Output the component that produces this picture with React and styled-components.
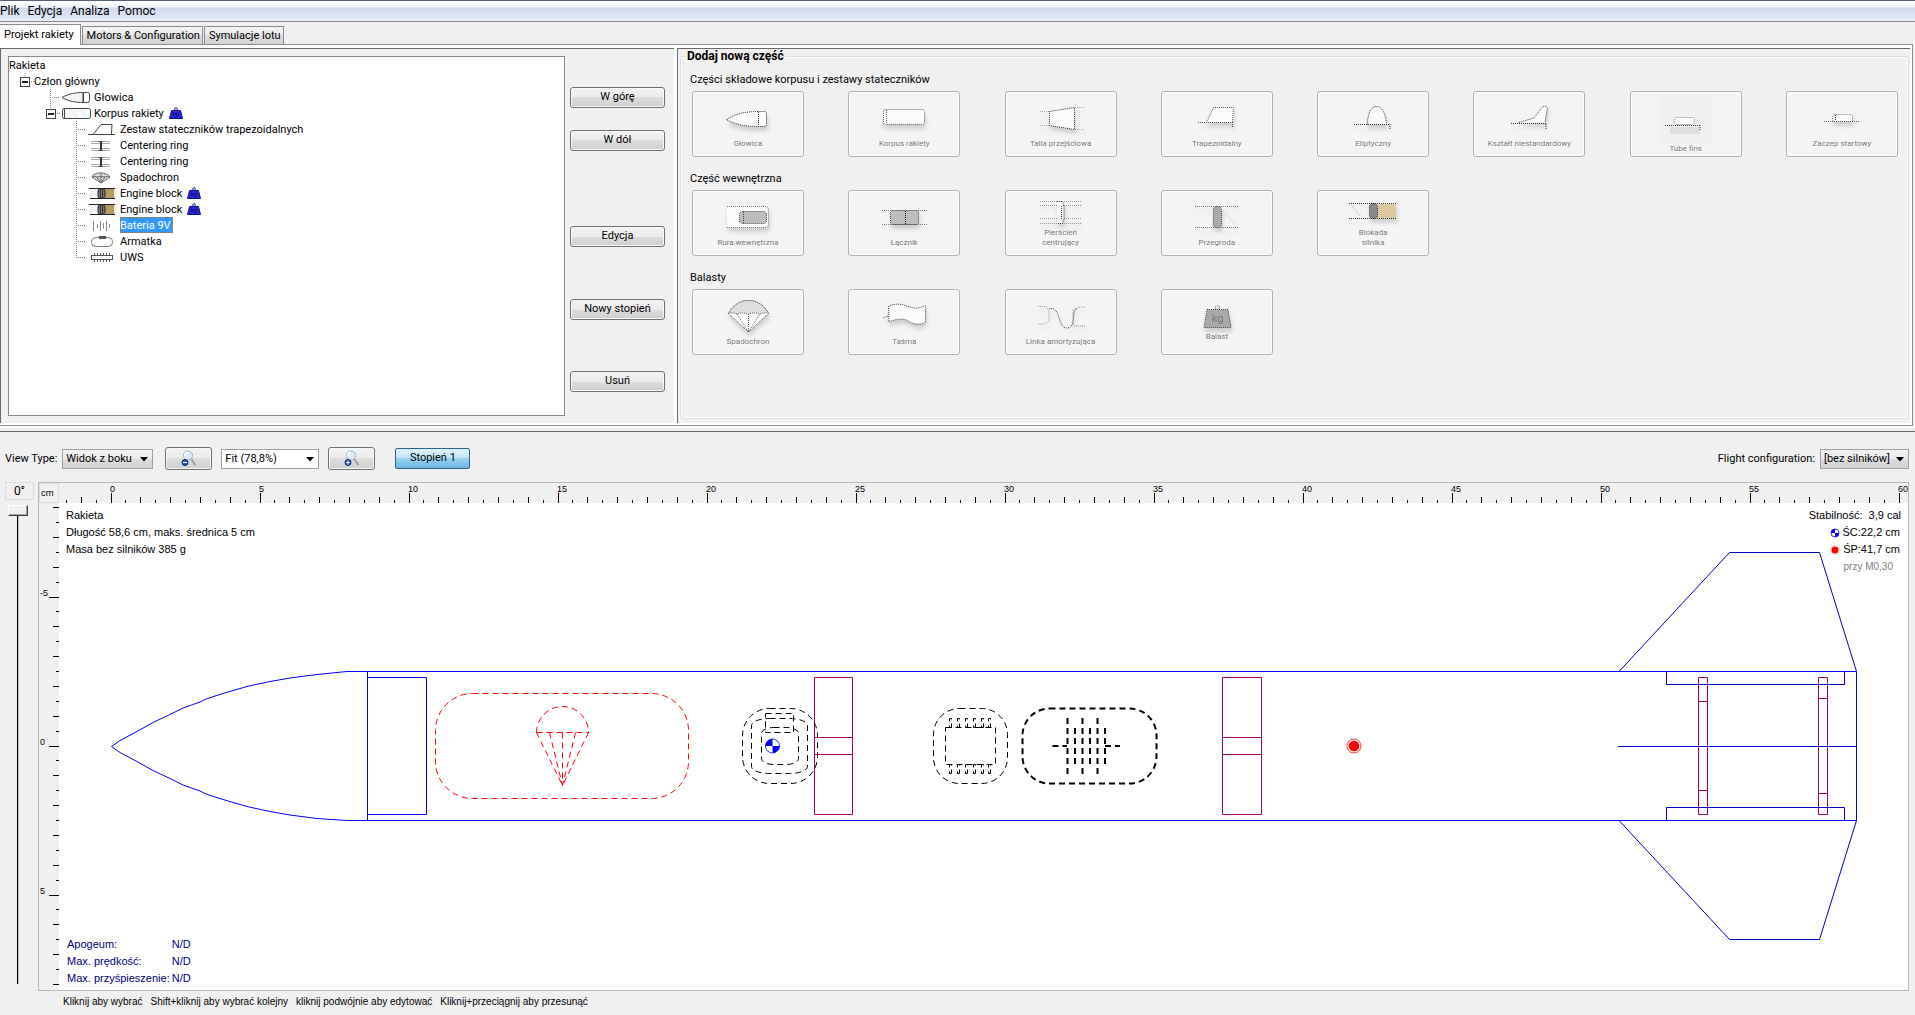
import React from "react";
import styled, { createGlobalStyle, css } from "styled-components";

const UI_FONT = `Roboto, "Noto Sans", sans-serif`;
const DRAW_FONT = `"Liberation Sans", Arial, sans-serif`;

const GlobalStyle = createGlobalStyle`
  *, *::before, *::after { box-sizing: border-box; }
  body {
    margin: 0;
    background: #f0f0f0;
    color: #000;
    font: 11px/16px ${UI_FONT};
  }
  button, select, input { font: inherit; color: inherit; margin: 0; }
  svg { display: block; }
`;

const Window = styled.div`
  display: flex;
  flex-direction: column;
  min-height: 100vh;
`;

/* ---------- menu and tabs ---------- */

const MenuBar = styled.nav`
  display: flex;
  gap: 8px;
  height: 22px;
  padding: 1px 0 0;
  border-top: 1px solid #56627a;
  border-bottom: 1px solid #8b8b8b;
  background: linear-gradient(#ffffff 0, #f1f4fb 6px, #d3daed 7px, #e1e7f5 18px, #f0f0f0 20px);
`;

const MenuButton = styled.button`
  padding: 0;
  border: 0;
  background: none;
  font-size: 12px;
  line-height: 16px;
  height: 18px;
`;

const TabStrip = styled.div`
  display: flex;
  align-items: flex-end;
  gap: 1px;
  height: 23px;
  border-bottom: 1px solid #898c95;
  margin-right: 2px;
`;

const Tab = styled.button`
  height: 18px;
  padding: 1px 2px 0 4px;
  border: 1px solid #898c95;
  border-bottom: 0;
  background: linear-gradient(#f3f3f3, #ebebeb 50%, #dddddd 50%, #d2d2d2);
  line-height: 16px;
  ${(p) =>
    p.$active &&
    css`
      height: 21px;
      margin-bottom: -1px;
      padding: 0 6px 1px 4px;
      border-left: 0;
      background: #fff;
    `}
`;

/* ---------- upper panes ---------- */

const DesignTab = styled.section`
  display: flex;
  gap: 3px;
  margin-right: 2px;
  padding: 3px 2px 2px 0;
  border-right: 1px solid #898c95;
  border-bottom: 1px solid #898c95;
  background: #fff;
`;

const Pane = styled.div`
  display: flex;
  min-height: 375px;
  border-top: 1px solid #696969;
  border-left: 1px solid #696969;
  background: #f0f0f0;
`;

const TreePane = styled(Pane)`
  flex: 0 0 674px;
  gap: 5px;
  padding: 7px 9px 7px 7px;
`;

const Tree = styled.ul`
  flex: 1;
  margin: 0;
  padding: 0;
  list-style: none;
  border: 1px solid #828790;
  background: #fff;
`;

const TreeRow = styled.li`
  display: flex;
  align-items: center;
  height: 16px;
  padding-left: ${(p) => p.$indent}px;
`;

const Expander = styled.button`
  padding: 0;
  border: 0;
  background: none;
`;

const RowIcon = styled.svg`
  flex: none;
  width: 30px;
  height: 16px;
  margin-right: 3px;
`;

const RowLabel = styled.span`
  padding-top: 2px;
  white-space: pre;
  line-height: 14px;
  ${(p) =>
    p.$selected &&
    css`
      padding-right: 2px;
      background: #3399ff;
      color: #fff;
      outline: 1px dotted #cc6600;
      outline-offset: -1px;
    `}
`;

const RowWeight = styled.svg`
  width: 14px;
  height: 12px;
  margin-left: 5px;
`;

const Actions = styled.div`
  display: flex;
  flex-direction: column;
  width: 95px;
  padding-top: 31px;
`;

const ActionButton = styled.button`
  height: 21px;
  margin-bottom: ${(p) => p.$gap || 0}px;
  padding: 0 0 1px;
  border: 1px solid #707070;
  border-radius: 3px;
  background: linear-gradient(#f2f2f2, #ebebeb 50%, #dddddd 50%, #cfcfcf);
  box-shadow: inset 0 0 0 1px #f8f8f8;
  line-height: 16px;
`;

const PalettePane = styled(Pane)`
  flex: 1;
  min-width: 0;
  padding: 0 1px 4px 2px;
`;

const Palette = styled.fieldset`
  flex: 1;
  min-width: 0;
  margin: 0;
  padding: 9px 10px 0 11px;
  border: 1px solid #d5dfe5;
  border-radius: 3px;
  box-shadow: inset 0 0 0 1px #fff;
`;

const PaletteTitle = styled.legend`
  margin-left: -6px;
  padding: 0 2px 0 1px;
  font-size: 12px;
  font-weight: bold;
  line-height: 14px;
  background: #f0f0f0;
`;

const PartGroup = styled.section`
  margin-bottom: 14px;
`;

const GroupTitle = styled.h3`
  margin: 0 -2px 3px;
  font-size: 11px;
  font-weight: normal;
  line-height: 16px;
`;

const PartGrid = styled.div`
  display: grid;
  grid-template-columns: repeat(8, 112px);
  justify-content: space-between;
`;

const PartButton = styled.button`
  display: flex;
  flex-direction: column;
  align-items: center;
  justify-content: center;
  height: 66px;
  padding: 0;
  border: 1px solid #adb2b5;
  border-radius: 3px;
  background: #f4f4f4;
  box-shadow: inset 0 0 0 1px #fcfcfc;
  color: #777;
  font-size: 8px;
  line-height: 10px;
`;

const PartCaption = styled.span`
  max-width: ${(p) => (p.$wrap ? "48px" : "none")};
  text-shadow: 1px 1px 0 #fff;
`;

const PartIcon = styled.svg`
  width: ${(p) => p.$w || 48}px;
  height: ${(p) => p.$h || 40}px;
  overflow: visible;
  fill: #fbfbfb;
  stroke: #333;
  stroke-width: 1;
  stroke-dasharray: 1 1;
  background: ${(p) => (p.$patch ? "#f0f0f0" : "none")};
  filter: ${(p) => (p.$patch ? "none" : "drop-shadow(1px 4px 2px rgba(0, 0, 0, 0.16))")};
`;

/* ---------- lower pane ---------- */

const FigurePane = styled.section`
  display: flex;
  flex-direction: column;
  flex: 1;
  margin-top: 2px;
  border-top: 3px solid #f0f0f0;
  box-shadow: 0 -2px 0 #fff;
`;

const Toolbar = styled.div`
  display: flex;
  align-items: center;
  height: 51px;
  padding: 3px 6px 0 5px;
  border-top: 1px solid #696969;
`;

const FieldLabel = styled.label`
  margin-right: 5px;
  padding-top: 1px;
`;

const SelectBox = styled.span`
  display: inline-grid;
  align-items: center;
  width: ${(p) => p.$w}px;
  margin-right: ${(p) => p.$gap || 0}px;
  > * { grid-area: 1 / 1; }
  > svg { justify-self: end; margin: 2px 5px 0 0; pointer-events: none; }
`;

const Select = styled.select`
  appearance: none;
  width: 100%;
  height: 20px;
  padding: 1px 0 0 3px;
  border: 1px solid #a0a0a4;
  border-radius: 0;
  line-height: 16px;
  background: ${(p) =>
    p.$plain ? "#fff" : "linear-gradient(#f2f2f2, #ebebeb 50%, #dddddd 50%, #d2d2d2)"};
`;

const ZoomButton = styled.button`
  display: grid;
  place-items: center;
  width: 47px;
  height: 23px;
  margin-right: ${(p) => p.$gap}px;
  padding: 0;
  border: 1px solid #707070;
  border-radius: 3px;
  background: linear-gradient(#f2f2f2, #ebebeb 50%, #dddddd 50%, #cfcfcf);
  box-shadow: inset 0 0 0 1px #f8f8f8;
`;

const StageButton = styled.button`
  width: 75px;
  height: 21px;
  margin-right: auto;
  padding: 0 0 1px;
  border: 1px solid #2c628b;
  border-radius: 2px;
  background: linear-gradient(#e0f2fb, #c0e3f6 50%, #98d1ef 50%, #6fb6df);
  line-height: 16px;
`;

const Viewer = styled.div`
  display: flex;
  flex: 1;
  gap: 4px;
  padding: 0 6px 0 5px;
`;

const Rotation = styled.div`
  display: flex;
  flex-direction: column;
  width: 29px;
  padding: 0 0 7px;
`;

const Angle = styled.output`
  height: 18px;
  margin-bottom: 5px;
  border: 1px solid #dcdcdc;
  text-align: center;
  font-size: 12px;
`;

const AngleSlider = styled.input`
  && { margin: 0 6px 0 3px; }
  appearance: none;
  writing-mode: vertical-lr;
  flex: 1;
  width: 20px;
  background: linear-gradient(90deg, transparent 9px, #000 9px, #000 10px, #777 10px, #fff 11px, transparent 12px);
  &::-webkit-slider-thumb {
    appearance: none;
    width: 20px;
    height: 11px;
    border: 1px solid;
    border-color: #fff #404040 #404040 #fff;
    background: #f0f0f0;
    box-shadow: inset -1px -1px 0 #a0a0a0;
  }
`;

const Frame = styled.div`
  display: grid;
  grid-template-columns: 20px 1fr;
  grid-template-rows: 20px 1fr;
  flex: 1;
  min-width: 0;
  min-height: 509px;
  border: 1px solid #b8b8b8;
`;

const Unit = styled.div`
  padding-left: 1px;
  border: 1px solid #dcdcdc;
  font-size: 9px;
  line-height: 18px;
`;

const Ruler = styled.svg`
  width: 100%;
  height: 100%;
  font: 9px ${DRAW_FONT};
`;

const Sheet = styled.div`
  position: relative;
  overflow: hidden;
  background: #fff;
  font: 11px/16px ${DRAW_FONT};
`;

const Drawing = styled.svg`
  position: absolute;
  inset: 0;
  width: 100%;
  height: 100%;
`;

const Info = styled.div`
  position: absolute;
  top: 4px;
  left: 7px;
  line-height: 17px;
`;

const Stability = styled.div`
  position: absolute;
  top: 4px;
  right: 7px;
  display: grid;
  justify-items: end;
  line-height: 17px;
  white-space: pre;
`;

const Point = styled.span`
  display: flex;
  align-items: center;
  gap: 3px;
  padding-right: 1px;
`;

const Mach = styled.span`
  padding-right: 8px;
  font-size: 10px;
  color: #808080;
`;

const Results = styled.table`
  position: absolute;
  bottom: 3px;
  left: 8px;
  border-spacing: 0;
  color: #000080;
  th, td { padding: 0 2px 0 0; font-weight: normal; text-align: left; line-height: 17px; }
`;

const Hints = styled.footer`
  display: flex;
  gap: 8px;
  height: 24px;
  padding: 1px 0 0 63px;
  font: 10px/20px ${DRAW_FONT};
`;

/* ---------- small drawings ---------- */

const Arrow = () => (
  <svg width="8" height="5" viewBox="0 0 8 5">
    <path d="M0 0h8L4 4.5z" />
  </svg>
);

const WeightIcon = () => (
  <RowWeight viewBox="0 0 14 12">
    <circle cx="7" cy="2" r="1.4" fill="none" stroke="#3a3a8c" />
    <path d="M2.5 3.500h9l2 8h-13z" fill="#2424d8" stroke="#15157a" />
    <text x="7" y="9" fontSize="6" textAnchor="middle" fill="#0a0a66">kg</text>
  </RowWeight>
);

const Branch = ({ last }) => (
  <svg width="11" height="16" stroke="#808080" strokeDasharray="1 1">
    <path d={`M.5 0V${last ? 8 : 16}M0 8.5H10`} fill="none" />
  </svg>
);

const Toggle = ({ name, lead, stub }) => (
  <>
    <Expander aria-label={`Zwiń: ${name}`}>
      <svg width="10" height="16" fill="#fff" stroke="#444">
        <path d={`M${stub} 0V4`} stroke="#808080" strokeDasharray="1 1" />
        <rect x=".5" y="4.5" width="9" height="9" />
        <path d="M2 9H8" stroke="#222" strokeWidth="2" />
      </svg>
    </Expander>
    <svg width={lead} height="16" stroke="#808080" strokeDasharray="1 1">
      <path d={`M1 8.5H${lead}`} />
    </svg>
  </>
);

const engineGlyph = (
  <g>
    <rect x="3" y="3" width="27" height="10" fill="#f4f4f4" stroke="none" />
    <rect x="18" y="4" width="9" height="9" fill="#b79a5c" stroke="none" />
    <rect x="11" y="4" width="7" height="9" rx="2" fill="#777" stroke="#222" />
    <path d="M13.5 5v7M15.5 5v7" stroke="#333" />
    <path d="M2 3.5H28M3 13.5H28" stroke="#222" />
  </g>
);

const ringGlyph = (
  <g>
    <path d="M4 4.5H23M4 6.5H23M4 11.5H23M4 13.5H23" stroke="#aaa" />
    <path d="M11 4.5h5M11 13.5h5" stroke="#555" />
    <path d="M14 5v8" stroke="#333" strokeWidth="2" />
  </g>
);

const rowGlyphs = {
  nose: (
    <g>
      <path d="M1 8.500C8 4.500 15 3.500 22 3.500V13.500C15 13.500 8 12.500 1 8.500z" fill="#f4f4f4" />
      <path d="M22.500 3.500h4q2 0 2 2v6q0 2-2 2h-4z" />
    </g>
  ),
  body: (
    <g>
      <rect x="1.5" y="3.5" width="28" height="10" rx="2" fill="#f8f8f8" />
      <path d="M3.500 4v9" />
      <path d="M10 5l6 7M20 5l6 7" stroke="#e2e2e2" />
    </g>
  ),
  fins: <path d="M1 13.500H28M6.500 13L14 3.500H25L24.500 13" fill="none" />,
  ring: ringGlyph,
  chute: (
    <g stroke="#666">
      <path d="M5 8C7 2.500 20 2.500 23 8L14 14z" fill="#ddd" />
      <path d="M5 8q3-1 5 0 4-1 8 0 2-1 5 0M10 8l4 6 4-6M14 4v10" fill="none" />
    </g>
  ),
  engine: engineGlyph,
  battery: (
    <path d="M6.500 4V14M10.500 7V11M13.500 4V14M16.500 6V12M19.500 4V14M22.500 7V11" stroke="#888" />
  ),
  cannon: (
    <g stroke="#777">
      <rect x="4.5" y="4.5" width="21" height="9" rx="4" />
      <path d="M12 4.500h7" strokeWidth="3" stroke="#555" />
    </g>
  ),
  chip: (
    <g stroke="#555">
      <rect x="4.5" y="6.5" width="21" height="4" />
      <path d="M7.500 4v2M10.500 4v2M13.500 4v2M16.500 4v2M19.500 4v2M22.500 4v2M7.500 11v2M10.500 11v2M13.500 11v2M16.500 11v2M19.500 11v2M22.500 11v2" />
    </g>
  ),
};

const TreeGlyph = ({ kind }) => (
  <RowIcon fill="#fff" stroke="#444">{rowGlyphs[kind]}</RowIcon>
);

const Magnifier = ({ plus }) => (
  <svg width="16" height="17" viewBox="0 0 16 17">
    <path d="M10 9l4 6" stroke="#b0b0b0" strokeWidth="2" />
    <path d="M10.500 9l4 6" stroke="#777" strokeWidth=".7" />
    <circle cx="7" cy="5.500" r="4.500" fill="#dcebfa" stroke="#9db2c8" />
    <path d="M4 5.500a3 3 0 013-3" stroke="#fff" strokeWidth="1.600" fill="none" />
    <circle cx="4" cy="12.500" r="3" fill="#1b4fae" stroke="#0d2e73" />
    <path d={plus ? "M2 12.500h4M4 10.500v4" : "M2 12.500h4"} stroke="#fff" strokeWidth="1.200" />
  </svg>
);

/* ---------- part palette ---------- */

const groups = [
  {
    title: "Części składowe korpusu i zestawy stateczników",
    parts: [
      {
        name: "Głowica",
        art: (
          <path d="M2.500 20.500C12 14.500 22 12.500 34.500 12.500V27.500C22 27.500 12 26 2.500 20.500zM34.500 12.500h6q2 0 2 2v11q0 2-2 2h-6" />
        ),
      },
      {
        name: "Korpus rakiety",
        art: (
          <g stroke="#666">
            <rect x="3.5" y="10.5" width="41" height="15" rx="2" />
            <path d="M6.500 11v14" />
          </g>
        ),
      },
      {
        name: "Talia przejściowa",
        art: (
          <g>
            <path d="M12.500 12.500L37.500 8.500V30.500L12.500 26.500z" />
            <path d="M3 12.500h9M3 26.500h9M38 8.500h10M38 30.500h10" stroke="#aaa" />
          </g>
        ),
      },
      {
        name: "Trapezoidalny",
        art: (
          <g stroke="#555">
            <path d="M13.500 23.500L20.500 8.500H40.500L39.500 23.500" />
            <path d="M5 23.500H40M39.500 23V29" />
          </g>
        ),
      },
      {
        name: "Eliptyczny",
        art: (
          <g>
            <path d="M18.500 25.500C18.500 17 21 7.500 27.500 7.500S37 17 37.500 25.500" />
            <path d="M5 25.500H41M41 25V31" />
          </g>
        ),
      },
      {
        name: "Kształt niestandardowy",
        art: (
          <g>
            <path d="M14 23.500L29 19L37 8.500Q40 6 42.500 8.500L40 23.500" />
            <path d="M6 24.500H41M41 25V31" />
          </g>
        ),
      },
      {
        name: "Tube fins",
        w: 50,
        h: 50,
        patch: true,
        art: (
          <g>
            <rect x="9" y="33" width="30" height="7" fill="#dedede" stroke="none" />
            <rect x="13.5" y="23.5" width="20" height="7" rx="2" stroke="#888" />
            <path d="M4 31.500H39M39 31V37" />
          </g>
        ),
      },
      {
        name: "Zaczep startowy",
        art: (
          <g>
            <rect x="14.5" y="15.5" width="20" height="7" rx="2" stroke="#777" />
            <path d="M17.500 16v6" />
            <path d="M6 22.500H41" stroke="#666" />
          </g>
        ),
      },
    ],
  },
  {
    title: "Część wewnętrzna",
    parts: [
      {
        name: "Rura wewnętrzna",
        art: (
          <g stroke="#777">
            <path d="M3 8.500H41Q44.500 8.500 44.500 12V26Q44.500 29.500 41 29.500H3" />
            <rect x="15.5" y="13.5" width="27" height="12" rx="3" fill="#bdbdbd" stroke="#444" />
            <path d="M19.500 14v11" stroke="#444" />
          </g>
        ),
      },
      {
        name: "Łącznik",
        art: (
          <g stroke="#777">
            <rect x="10.5" y="12.5" width="28" height="14" rx="2" fill="#bdbdbd" stroke="#444" />
            <path d="M25.500 13v13" stroke="#111" />
            <path d="M2 12.500H47M2 26.500H47" />
          </g>
        ),
      },
      {
        name: "Pierścień centrujący",
        h: 30,
        wrap: true,
        art: (
          <g stroke="#999">
            <path d="M3 3.500H45M3 7.500H45M3 20.500H45M3 25.500H45" />
            <path d="M20 3.500h6v4h1v14h-1v4h-6M24.500 8v13" stroke="#444" />
          </g>
        ),
      },
      {
        name: "Przegroda",
        art: (
          <g stroke="#777">
            <path d="M2 8.500H45M2 29.500H45" />
            <rect x="20.5" y="8.5" width="8" height="21" rx="3" fill="#aaa" stroke="#444" />
            <path d="M30 12l12 14" stroke="#ccc" />
          </g>
        ),
      },
      {
        name: "Blokada silnika",
        h: 30,
        wrap: true,
        art: (
          <g>
            <rect x="29" y="6" width="18" height="14" fill="#dcc9a0" stroke="none" />
            <rect x="20.5" y="5.5" width="8" height="15" rx="3" fill="#888" />
            <path d="M0 5.500H48M0 20.500H48" />
            <path d="M3 8l9 11" stroke="#aaa" />
          </g>
        ),
      },
    ],
  },
  {
    title: "Balasty",
    parts: [
      {
        name: "Spadochron",
        art: (
          <g stroke="#555">
            <path d="M4.500 16.500C9 8 16 3.500 24.500 3.500S40 8 44.500 16.500L24.500 35z" />
            <path d="M4.500 16.500C9 8 16 3.500 24.500 3.500S40 8 44.500 16.500Q40 15 36 17Q30 15 24.500 17Q18 15 13 17Q9 15 4.500 16.500z" fill="#dedede" />
            <path d="M13 17L24.500 35L36 17M24.500 17V35" fill="none" />
          </g>
        ),
      },
      {
        name: "Taśma",
        art: (
          <g stroke="#444">
            <path d="M8.500 9.500C16 5 24 8 30 10S40 11 45.500 8.500V25C40 29 32 27 28 24S15 22 9 25z" />
            <path d="M8 19L3 21" />
          </g>
        ),
      },
      {
        name: "Linka amortyzująca",
        art: (
          <g fill="none" stroke="#444">
            <path d="M1 9.500h8l3 4V24q-3 3-6 3H1" stroke="#999" />
            <path d="M12 12C24 8 20 31 30 31S34 12 40 12" />
            <path d="M36 28V13q3-3 12-3M37 29h11" stroke="#888" />
          </g>
        ),
      },
      {
        name: "Balast",
        h: 30,
        art: (
          <g stroke="#444">
            <circle cx="24.500" cy="5.500" r="2" fill="none" />
            <path d="M14 7.500H35L38 25.500H11z" fill="#a9a9a9" />
            <text x="24.500" y="20" fontSize="11" textAnchor="middle" fill="#777" stroke="none">kg</text>
          </g>
        ),
      },
    ],
  },
];

/* ---------- component tree ---------- */

const rows = [
  { label: "Głowica", indent: 41, icon: "nose" },
  { label: "Korpus rakiety", indent: 37, icon: "body", open: true, weight: true },
  { label: "Zestaw stateczników trapezoidalnych", icon: "fins" },
  { label: "Centering ring", icon: "ring" },
  { label: "Centering ring", icon: "ring" },
  { label: "Spadochron", icon: "chute" },
  { label: "Engine block", icon: "engine", weight: true },
  { label: "Engine block", icon: "engine", weight: true },
  { label: "Bateria 9V", icon: "battery", selected: true },
  { label: "Armatka", icon: "cannon" },
  { label: "UWS", icon: "chip", last: true },
];

/* ---------- rulers and rocket figure ---------- */

/* Pixels per centimetre and the zero marks measured from the sheet's corner. */
const SCALE = 29.8;
const ZERO_X = 52;
const ZERO_Y = 243;

const halfCentimetres = (from, to) =>
  Array.from({ length: to - from + 1 }, (_, i) => from + i);

const tickLength = (n) => (n % 10 === 0 ? 10 : n % 2 === 0 ? 6 : 3);

const TopRuler = () => (
  <Ruler shapeRendering="crispEdges">
    {halfCentimetres(-3, 120).map((n) => {
      const x = Math.floor(ZERO_X + (n * SCALE) / 2);
      return (
        <g key={n}>
          <rect x={x} y={20 - tickLength(n)} width="1" height={tickLength(n)} />
          {n % 10 === 0 && <text x={x - 1} y="9">{n / 2}</text>}
        </g>
      );
    })}
  </Ruler>
);

const SideRuler = () => (
  <Ruler shapeRendering="crispEdges">
    {halfCentimetres(-16, 16).map((n) => {
      const y = Math.floor(ZERO_Y + (n * SCALE) / 2);
      return (
        <g key={n}>
          <rect x={20 - tickLength(n)} y={y} width={tickLength(n)} height="1" />
          {n % 10 === 0 && <text x="1" y={y - 1}>{n / 2}</text>}
        </g>
      );
    })}
  </Ruler>
);

const noseProfile = [
  [111.5, 0], [120, 6], [136, 14.5], [153, 24], [171, 32.5], [183, 38.5], [200, 44.5],
  [205, 47], [215, 50.5], [233, 56], [249, 60.5], [270, 65], [290, 68.5], [317, 72], [347, 75], [367.5, 75],
];
const nosePoints = (side) =>
  noseProfile.map(([x, r]) => `${x},${746.5 + side * Math.min(r, side < 0 ? 75 : 74)}`).join(" ");

const pins = [949.5, 957.5, 965.5, 973.5, 981.5, 988.5];

const CgMark = ({ cx, cy, r }) => (
  <g>
    <circle cx={cx} cy={cy} r={r} fill="#fff" stroke="#0000ff" strokeWidth=".8" />
    <path
      d={`M${cx} ${cy}H${cx - r}A${r} ${r} 0 01${cx} ${cy - r}zM${cx} ${cy}H${cx + r}A${r} ${r} 0 01${cx} ${cy + r}z`}
      fill="#0000ff"
    />
  </g>
);

const CpMark = ({ cx, cy, r }) => (
  <g>
    <circle cx={cx} cy={cy} r={r} fill="#fff" stroke="#ff0000" strokeWidth=".8" />
    <circle cx={cx} cy={cy} r={r - 1.7} fill="#ff0000" />
  </g>
);

const Rocket = () => (
  <Drawing fill="none" aria-label="Widok z boku">
    <g transform="translate(-59 -503)">
      <g stroke="#0000cc">
        <path d="M1619 671.500L1729.500 552.500H1819.500L1856.500 671.500" />
        <path d="M1619 820.500L1729.500 939.500H1819.500L1856.500 820.500" />
        <path d="M1618 746.500H1856" />
        <path d="M1666.500 671.500V684.500H1844.500V671.500M1666.500 820.500V807.500H1844.500V820.500" />
      </g>
      <g stroke="#0000ff">
        <polyline points={nosePoints(-1)} />
        <polyline points={nosePoints(1)} />
        <path d="M367.500 671.500V820.500M367.500 677.500H426.500V814.500H367.500" />
        <path d="M367.500 671.500H1856.500V820.500H367.500" />
      </g>
      <g stroke="#a8005f">
        <path d="M814.500 677.500H852.500V814.500H814.500zM814.500 737.500H852.500M814.500 754.500H852.500" />
        <path d="M1222.500 677.500H1261.500V814.500H1222.500zM1222.500 737.500H1261.500M1222.500 754.500H1261.500" />
        <path d="M1698.500 677.500H1707.500V814.500H1698.500zM1698.500 701.500h9M1698.500 790.500h9" />
        <path d="M1818.500 677.500H1827.500V814.500H1818.500zM1818.500 698.500h9M1818.500 793.500h9" />
      </g>
      <g stroke="#ff0000" strokeDasharray="6 4">
        <rect x="435.5" y="693.5" width="253" height="105" rx="37" />
        <path d="M536.500 732.500a26 26 0 0152 0M536.500 732.500h52M536.500 732.500l26 53M549.500 732.500l13 53M562.500 732.500v53M575.500 732.500l-13 53M588.500 732.500l-26 53" />
      </g>
      <g stroke="#000" strokeDasharray="6 4">
        <rect x="742.5" y="708.5" width="75" height="75" rx="27" />
        <rect x="751.5" y="718.5" width="56" height="55" rx="18" ry="7" />
        <rect x="761.5" y="727.5" width="37" height="37" rx="12" ry="6" />
        <rect x="765.5" y="713.5" width="28" height="19" />
        <rect x="933.5" y="708.5" width="74" height="75" rx="26" />
        <rect x="945.5" y="727.5" width="50" height="37" />
        {pins.map((x) => (
          <path key={x} d={`M${x} 727.500h2v-9h-2zM${x} 773.500h2v-9h-2z`} />
        ))}
      </g>
      <g stroke="#000" strokeWidth="2" strokeDasharray="6 4">
        <rect x="1022.5" y="708.5" width="134" height="75" rx="27" />
        <path d="M1067.500 718V774M1082.500 718V774M1097.500 718V774" />
        <path d="M1075 728V765M1090 728V765M1105 728V765" />
        <path d="M1052.500 746H1067M1105 746H1120" />
      </g>
      <CgMark cx={772.5} cy={746} r={7} />
      <CpMark cx={1354} cy={746} r={7} />
    </g>
  </Drawing>
);

export default function App() {
  return (
    <Window>
      <GlobalStyle />
      <MenuBar>
        {["Plik", "Edycja", "Analiza", "Pomoc"].map((m) => (
          <MenuButton key={m}>{m}</MenuButton>
        ))}
      </MenuBar>
      <TabStrip role="tablist">
        <Tab role="tab" aria-selected="true" $active>Projekt rakiety</Tab>
        <Tab role="tab">Motors &amp; Configuration</Tab>
        <Tab role="tab">Symulacje lotu</Tab>
      </TabStrip>

      <DesignTab>
        <TreePane>
          <Tree>
            <TreeRow $indent={0}><RowLabel>Rakieta</RowLabel></TreeRow>
            <TreeRow $indent={11}>
              <Toggle name="Człon główny" lead={4} stub={5} />
              <RowLabel>Człon główny</RowLabel>
            </TreeRow>
            {rows.map((r, i) => (
              <TreeRow key={i} $indent={r.indent || 67}>
                {r.open ? <Toggle name={r.label} lead={5} stub={4.5} /> : <Branch last={r.last} />}
                <TreeGlyph kind={r.icon} />
                <RowLabel $selected={r.selected}>{r.label}</RowLabel>
                {r.weight && <WeightIcon />}
              </TreeRow>
            ))}
          </Tree>
          <Actions>
            <ActionButton $gap={22}>W górę</ActionButton>
            <ActionButton $gap={75}>W dół</ActionButton>
            <ActionButton $gap={52}>Edycja</ActionButton>
            <ActionButton $gap={51}>Nowy stopień</ActionButton>
            <ActionButton>Usuń</ActionButton>
          </Actions>
        </TreePane>

        <PalettePane>
          <Palette>
            <PaletteTitle>Dodaj nową część</PaletteTitle>
            {groups.map((g) => (
              <PartGroup key={g.title}>
                <GroupTitle>{g.title}</GroupTitle>
                <PartGrid>
                  {g.parts.map((p) => (
                    <PartButton key={p.name}>
                      <PartIcon $w={p.w} $h={p.h} $patch={p.patch}>{p.art}</PartIcon>
                      <PartCaption $wrap={p.wrap}>{p.name}</PartCaption>
                    </PartButton>
                  ))}
                </PartGrid>
              </PartGroup>
            ))}
          </Palette>
        </PalettePane>
      </DesignTab>

      <FigurePane>
        <Toolbar>
          <FieldLabel htmlFor="view">View Type:</FieldLabel>
          <SelectBox $w={91} $gap={12}>
            <Select id="view"><option>Widok z boku</option></Select>
            <Arrow />
          </SelectBox>
          <ZoomButton $gap={9} aria-label="Pomniejsz"><Magnifier /></ZoomButton>
          <SelectBox $w={98} $gap={9}>
            <Select $plain aria-label="Skala"><option>Fit (78,8%)</option></Select>
            <Arrow />
          </SelectBox>
          <ZoomButton $gap={20} aria-label="Powiększ"><Magnifier plus /></ZoomButton>
          <StageButton>Stopień 1</StageButton>
          <FieldLabel htmlFor="config">Flight configuration:</FieldLabel>
          <SelectBox $w={89}>
            <Select id="config"><option>[bez silników]</option></Select>
            <Arrow />
          </SelectBox>
        </Toolbar>

        <Viewer>
          <Rotation>
            <Angle htmlFor="angle">0°</Angle>
            <AngleSlider id="angle" type="range" min="0" max="360" defaultValue="0" aria-label="Obrót" />
          </Rotation>
          <Frame>
            <Unit>cm</Unit>
            <TopRuler />
            <SideRuler />
            <Sheet>
              <Rocket />
              <Info>
                <div>Rakieta</div>
                <div>Długość 58,6 cm, maks. średnica 5 cm</div>
                <div>Masa bez silników 385 g</div>
              </Info>
              <Stability>
                <span>Stabilność:  3,9 cal</span>
                <Point>
                  <svg width="10" height="10"><CgMark cx={5} cy={5} r={4} /></svg>
                  ŚC:22,2 cm
                </Point>
                <Point>
                  <svg width="10" height="10"><circle cx="5" cy="5" r="3.500" fill="#ff0000" /><circle cx="5" cy="5" r="4.500" fill="none" stroke="#ffb0b0" strokeWidth=".6" /></svg>
                  ŚP:41,7 cm
                </Point>
                <Mach>przy M0,30</Mach>
              </Stability>
              <Results>
                <tbody>
                  <tr><th scope="row">Apogeum:</th><td>N/D</td></tr>
                  <tr><th scope="row">Max. prędkość:</th><td>N/D</td></tr>
                  <tr><th scope="row">Max. przyśpieszenie:</th><td>N/D</td></tr>
                </tbody>
              </Results>
            </Sheet>
          </Frame>
        </Viewer>
        <Hints>
          <span>Kliknij aby wybrać</span>
          <span>Shift+kliknij aby wybrać kolejny</span>
          <span>kliknij podwójnie aby edytować</span>
          <span>Kliknij+przeciągnij aby przesunąć</span>
        </Hints>
      </FigurePane>
    </Window>
  );
}
